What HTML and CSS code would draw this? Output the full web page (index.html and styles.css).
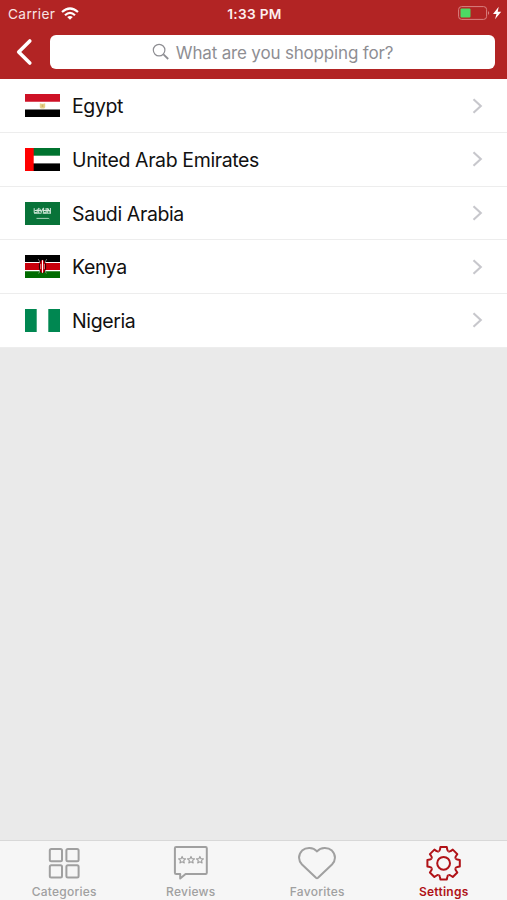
FILE: index.html
```html
<!DOCTYPE html>
<html lang="en">
<head>
<meta charset="utf-8">
<title>Countries</title>
<link rel="stylesheet" href="styles.css">
</head>
<body>
<div class="app">
  <header class="header">
    <div class="status">
      <div class="carrier"><span class="carrier-name">Carrier</span>
        <svg class="wifi" width="18" height="14" viewBox="0 0 18 14"><g fill="none" stroke="#fff" stroke-width="2.2"><path d="M1 5Q9-2 17 5"/><path d="M4 8.2Q9 3.7 14 8.2"/></g><path fill="#fff" d="M6.2 10Q9 7.8 11.8 10L9 12.8Z"/></svg>
      </div>
      <span class="time">1:33 PM</span>
      <svg class="battery" width="44" height="16" viewBox="0 0 44 16"><rect x=".6" y="1.6" width="28" height="12.8" rx="3" fill="none" stroke="#d98282"/><rect x="2.5" y="3.5" width="10" height="9" rx="1" fill="#4cd964"/><path d="M30 6Q32.4 8 30 10Z" fill="#d98282"/><path d="M40.7 1.8L35 8.9H38.5L37 14.2L43.2 6.8H39.7Z" fill="#fff"/></svg>
    </div>
    <div class="searchbar">
      <svg class="back" width="18" height="28" viewBox="0 0 18 28"><path d="M14.8 3L3.7 14L14.8 25" fill="none" stroke="#fff" stroke-width="3.6" stroke-linecap="round" stroke-linejoin="round"/></svg>
      <div class="search">
        <svg width="18" height="18" viewBox="0 0 18 18" fill="none" stroke="#8e8e93"><circle cx="7.1" cy="7.1" r="5.8" stroke-width="1.2"/><path d="M11.4 11.4L16.2 16" stroke-width="1.8"/></svg>
        <span class="placeholder">What are you shopping for?</span>
      </div>
    </div>
  </header>
  <main class="list">
    <div class="row">
      <svg class="flag" viewBox="0 0 35 23"><path fill="#fff" d="M0 0h35v23H0z"/><path fill="#ce1126" d="M0 0h35v7.8H0z"/><path d="M0 15.4h35V23H0z"/><path fill="#e6d28c" d="M14.8 9.2l2 .6h1.4l2-.6v4l-1 1.4h-3.4l-1-1.4z"/><path fill="#d2b568" d="M16.7 10.6h1.6v2.4h-1.6z"/></svg>
      <span class="name">Egypt</span>
      <svg class="chevron" viewBox="0 0 12 16"><path d="M1.5 1.2L8.8 8L1.5 14.8"/></svg>
    </div>
    <div class="row">
      <svg class="flag" viewBox="0 0 35 23"><path fill="#fff" d="M0 0h35v23H0z"/><path fill="#00732f" d="M8 0h27v7.7H8z"/><path d="M8 15.4h27V23H8z"/><path fill="#f00" d="M0 0h8.7v23H0z"/></svg>
      <span class="name">United Arab Emirates</span>
      <svg class="chevron" viewBox="0 0 12 16"><path d="M1.5 1.2L8.8 8L1.5 14.8"/></svg>
    </div>
    <div class="row">
      <svg class="flag" viewBox="0 0 35 23"><path fill="#087339" d="M0 0h35v23H0z"/><g fill="none" stroke="#d3e7da" stroke-width="1"><path d="M9.2 6.2v4.5h3V6.8m1.5-.9v5.2m1-4.6l1.7 3.9 1.4-4m.8-.6v5h2.5V6m1.2 0v5m.9-4.6l1.2 4m1-4.4v5.2M9 11.2h7.5m1.2 0H26M9.6 8.5h7m1 0h7.5"/><path d="M11.5 16.4h11.8l1 .5" stroke-width=".8"/></g></svg>
      <span class="name">Saudi Arabia</span>
      <svg class="chevron" viewBox="0 0 12 16"><path d="M1.5 1.2L8.8 8L1.5 14.8"/></svg>
    </div>
    <div class="row">
      <svg class="flag" viewBox="0 0 35 23"><path fill="#fff" d="M0 0h35v23H0z"/><path d="M0 0h35v7H0z"/><path fill="#c8000b" d="M0 8h35v7H0z"/><path fill="#006b00" d="M0 16.2h35V23H0z"/><path d="M13.2 4L21.4 18.5M21.8 4L13.6 18.5" stroke="#bbb" stroke-width=".6"/><ellipse cx="17.5" cy="11.5" rx="3.6" ry="6.6" fill="#210000"/><ellipse cx="17.5" cy="11.5" rx="2.6" ry="6.8" fill="#c8000b"/><path d="M17.5 5.2v12.6" stroke="#fff" stroke-width="1"/><path d="M15.7 9v5M19.3 9v5" stroke="#fff" stroke-width=".5"/></svg>
      <span class="name">Kenya</span>
      <svg class="chevron" viewBox="0 0 12 16"><path d="M1.5 1.2L8.8 8L1.5 14.8"/></svg>
    </div>
    <div class="row">
      <svg class="flag" viewBox="0 0 35 23"><path fill="#fff" d="M0 0h35v23H0z"/><path fill="#008751" d="M0 0h11.7v23H0zM23.3 0H35v23H23.3z"/></svg>
      <span class="name">Nigeria</span>
      <svg class="chevron" viewBox="0 0 12 16"><path d="M1.5 1.2L8.8 8L1.5 14.8"/></svg>
    </div>
  </main>
  <nav class="tabs">
    <div class="tab">
      <svg width="40" height="40" viewBox="-20 -20 40 40"><g><rect x="-14.2" y="-14" width="12.2" height="12.2" rx="1.5"/><rect x="2.4" y="-14" width="12.2" height="12.2" rx="1.5"/><rect x="-14.2" y="2.3" width="12.2" height="12.2" rx="1.5"/><rect x="2.4" y="2.3" width="12.2" height="12.2" rx="1.5"/></g></svg>
      <span class="label">Categories</span>
    </div>
    <div class="tab">
      <svg width="40" height="40" viewBox="-20 -20 40 40"><path d="M-14.9-16H14.6Q15.8-16 15.8-14.8V9.7Q15.8 10.9 14.6 10.9H-5.4L-10.8 15.5V10.9H-14.9Q-16.1 10.9-16.1 9.7V-14.8Q-16.1-16-14.9-16Z"/><g stroke-width="1.1"><path id="star" d="M-8.9-6.6L-7.9-4.3L-5.4-4.1L-7.3-2.4L-6.7 0L-8.9-1.3L-11.1 0L-10.5-2.4L-12.4-4.1L-9.9-4.3Z"/><use href="#star" x="8.9"/><use href="#star" x="17.8"/></g></svg>
      <span class="label">Reviews</span>
    </div>
    <div class="tab">
      <svg width="40" height="40" viewBox="-20 -20 40 40"><path d="M0-11.6C-4-16.2-11-16.1-14.9-12.4C-19.2-8.1-18.7-2.3-15 1.5L-1 14.8Q0 15.7 1 14.8L15 1.5C18.7-2.3 19.2-8.1 14.9-12.4C11-16.1 4-16.2 0-11.6Z"/></svg>
      <span class="label">Favorites</span>
    </div>
    <div class="tab active">
      <svg width="40" height="40" viewBox="-19.6 -20.3 40 40"><circle r="6.4"/><path id="tooth" d="M-5-12Q-3.9-12.3-3.7-13.6L-3.2-16.2H3.2L3.7-13.6Q3.9-12.3 5-12"/><use href="#tooth" transform="rotate(45)"/><use href="#tooth" transform="rotate(90)"/><use href="#tooth" transform="rotate(135)"/><use href="#tooth" transform="rotate(180)"/><use href="#tooth" transform="rotate(225)"/><use href="#tooth" transform="rotate(270)"/><use href="#tooth" transform="rotate(315)"/></svg>
      <span class="label">Settings</span>
    </div>
  </nav>
</div>
</body>
</html>
```
FILE: styles.css
```css
* { box-sizing: border-box; }
body { margin: 0; font-family: Inter, "Liberation Sans", sans-serif; }
svg { display: block; flex: none; }
.app { height: 900px; display: flex; flex-direction: column; background: #eaeaea; }
.header { height: 79.4px; background: #b22424; color: #fff; }
.status { height: 28px; display: grid; grid-template-columns: 1fr auto 1fr; align-items: center; padding: 0 5px 0 8px; font-size: 13.7px; }
.carrier { display: flex; align-items: center; gap: 6px; }
.carrier-name { letter-spacing: .35px; color: #f8e4e4; }
.time { font-weight: 600; letter-spacing: .3px; color: #fdeeee; margin-right: 1px; }
.battery { justify-self: end; margin-top: -2px; }
.searchbar { display: flex; align-items: center; gap: 17px; padding: 7px 12px 0 15px; }
.search { flex: 1; height: 34px; background: #fff; border-radius: 6px; display: flex; align-items: center; justify-content: center; gap: 6px; color: #8e8e93; font-size: 17px; }
.placeholder { white-space: nowrap; letter-spacing: -.17px; padding-top: 1px; }
.list { flex: 1; }
.row { height: 53.7px; display: flex; align-items: center; padding: 0 23px 0 25px; background: #fff; border-bottom: 1.5px solid #ededed; color: #111; font-size: 19.5px; }
.flag { width: 35px; height: 23px; margin-right: 12px; }
.name { flex: 1; letter-spacing: -.38px; padding-top: 1px; }
.chevron { width: 12px; height: 16px; fill: none; stroke: #c7c7cc; stroke-width: 2.1; }
.tabs { height: 60px; display: grid; grid-template-columns: repeat(4, 1fr); padding-left: 1px; background: #f6f6f6; border-top: 1.5px solid #d8d8d8; color: #a0a0a0; }
.tab { display: flex; flex-direction: column; align-items: center; padding-top: 2px; }
.tab svg { fill: none; stroke: currentColor; stroke-width: 2; stroke-linejoin: round; }
.label { font-size: 12px; line-height: 18px; font-weight: 500; letter-spacing: .25px; }
.active { color: #b01217; }
.active .label { font-weight: 600; }
```
